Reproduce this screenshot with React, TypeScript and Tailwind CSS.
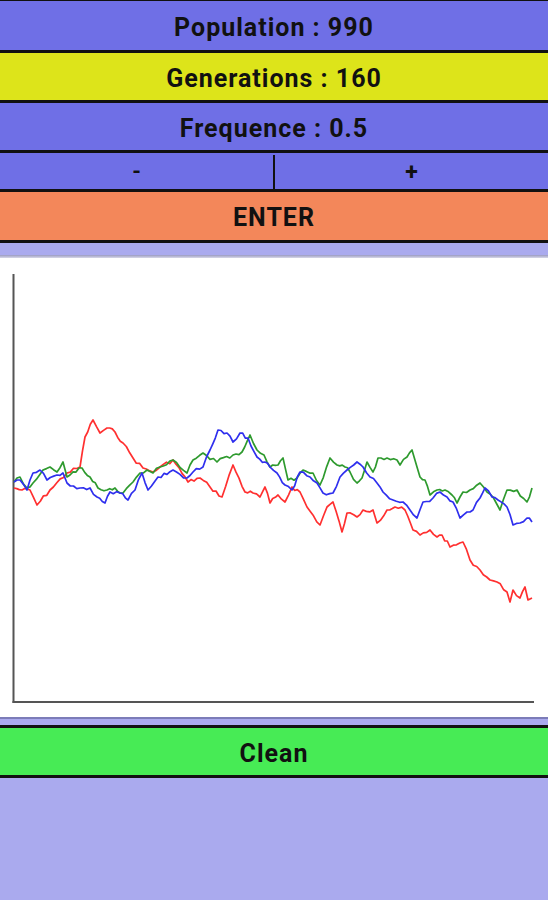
import React from "react";

type Pt = [number, number];

const red: Pt[] = [
  [14, 488], [22, 490], [30, 490], [37, 505], [50, 490], [67, 473], [80, 467], [85, 437], [93, 420],
  [100, 433], [107, 428], [115, 432], [123, 443], [133, 458], [143, 468], [153, 472], [160, 467],
  [173, 460], [188, 482], [200, 478], [210, 487], [222, 497], [233, 465], [245, 492], [253, 493],
  [260, 497], [265, 487], [270, 503], [278, 495], [285, 502], [292, 487], [300, 492], [307, 507],
  [320, 525], [327, 507], [333, 502], [342, 532], [347, 513], [357, 517], [363, 510], [373, 510],
  [377, 523], [387, 510], [395, 507], [405, 510], [413, 530], [420, 535], [430, 530], [437, 537],
  [442, 535], [450, 547], [463, 542], [470, 560], [480, 570], [490, 580], [497, 582], [507, 592],
  [510, 602], [513, 590], [520, 598], [525, 587], [528, 600], [532, 598],
];

const blue: Pt[] = [
  [14, 482], [20, 480], [27, 490], [33, 473], [40, 470], [47, 480], [57, 475], [63, 473], [67, 483],
  [80, 488], [90, 488], [97, 497], [105, 503], [110, 492], [120, 493], [128, 500], [135, 490],
  [142, 473], [148, 490], [158, 477], [173, 470], [187, 478], [193, 472], [203, 467], [210, 450],
  [218, 430], [227, 433], [233, 442], [240, 433], [248, 438], [257, 457], [265, 462], [270, 467],
  [277, 473], [285, 485], [292, 490], [300, 472], [310, 477], [317, 483], [323, 493], [333, 493],
  [340, 477], [347, 470], [357, 462], [363, 467], [370, 477], [377, 483], [383, 492], [393, 500],
  [403, 502], [410, 510], [417, 518], [423, 502], [433, 498], [440, 492], [447, 497], [453, 502],
  [460, 518], [467, 512], [473, 510], [480, 498], [485, 488], [492, 497], [498, 500], [507, 507],
  [513, 525], [520, 523], [527, 518], [532, 522],
];

const green: Pt[] = [
  [14, 482], [20, 477], [27, 488], [33, 483], [43, 470], [50, 467], [57, 472], [63, 462], [67, 477],
  [82, 468], [90, 477], [98, 488], [107, 490], [115, 488], [123, 493], [133, 482], [140, 473],
  [147, 470], [153, 473], [160, 467], [173, 460], [187, 473], [193, 460], [203, 453], [217, 462],
  [233, 455], [242, 452], [250, 435], [257, 450], [264, 455], [270, 467], [278, 465], [283, 458],
  [288, 480], [297, 478], [303, 470], [313, 473], [320, 485], [330, 458], [337, 465], [345, 467],
  [350, 472], [357, 483], [362, 478], [367, 462], [373, 472], [378, 458], [387, 458], [397, 460],
  [400, 465], [407, 457], [412, 450], [417, 467], [420, 477], [425, 480], [430, 495], [437, 490],
  [445, 490], [452, 495], [457, 503], [463, 492], [470, 490], [480, 483], [487, 492], [493, 497],
  [500, 510], [507, 490], [517, 490], [527, 502], [532, 488],
];

// add small jitter between anchors so the walk looks rough
function jagged(pts: Pt[], seed: number): string {
  let s = seed;
  const rnd = () => {
    s = (s * 9301 + 49297) % 233280;
    return s / 233280;
  };
  const out: Pt[] = [];
  for (let i = 0; i < pts.length - 1; i++) {
    const [x0, y0] = pts[i];
    const [x1, y1] = pts[i + 1];
    const steps = Math.max(1, Math.round((x1 - x0) / 3.2));
    for (let k = 0; k < steps; k++) {
      const t = k / steps;
      const j = k === 0 ? 0 : (rnd() - 0.5) * 4;
      out.push([x0 + (x1 - x0) * t, y0 + (y1 - y0) * t + j]);
    }
  }
  out.push(pts[pts.length - 1]);
  return out.map(([x, y]) => `${x.toFixed(1)},${y.toFixed(1)}`).join(" ");
}

const Row = ({ label, bg, h }: { label: string; bg: string; h: string }) => (
  <div className={`flex items-center justify-center border-b-[3px] border-[#111] pt-[3px] ${bg} ${h}`}>
    <span className="text-[25px] font-bold leading-none tracking-[1px] text-[#111]">{label}</span>
  </div>
);

export default function App() {
  return (
    <div
      className="h-[900px] w-[548px] overflow-hidden bg-[#aaaaee] flex flex-col"
      style={{ fontFamily: "Roboto, 'Noto Sans', sans-serif" }}
    >
      <div className="h-[1px] bg-[#111]" />
      <Row label="Population : 990" bg="bg-[#6f6fe6]" h="h-[52px]" />
      <Row label="Generations : 160" bg="bg-[#dde41a]" h="h-[50px]" />
      <Row label="Frequence : 0.5" bg="bg-[#6f6fe6]" h="h-[50px]" />
      <div className="flex h-[39px] border-b-[3px] border-[#111] bg-[#6f6fe6] pt-[2px]">
        <div className="flex flex-1 items-center justify-center border-r-[2px] border-[#111] text-[22px] font-bold leading-none text-[#111]">
          -
        </div>
        <div className="flex flex-1 items-center justify-center text-[23px] font-bold leading-none text-[#111]">
          +
        </div>
      </div>
      <Row label="ENTER" bg="bg-[#f3875a]" h="h-[51px]" />
      <div className="h-[12px] bg-[#aaaaee]" />
      <div className="h-[3px] bg-gradient-to-b from-[#9a9ac0] to-[#d8d8e8]" />
      <div className="h-[459px] bg-white">
        <svg width="548" height="459" viewBox="0 258 548 459">
          <line x1="13.5" y1="274" x2="13.5" y2="703" stroke="#555" strokeWidth="2" />
          <line x1="12.5" y1="702" x2="534" y2="702" stroke="#555" strokeWidth="2" />
          <polyline points={jagged(red, 7)} fill="none" stroke="#ff3030" strokeWidth="1.7" strokeLinejoin="round" />
          <polyline points={jagged(green, 23)} fill="none" stroke="#2e9a2e" strokeWidth="1.7" strokeLinejoin="round" />
          <polyline points={jagged(blue, 51)} fill="none" stroke="#2f2fee" strokeWidth="1.7" strokeLinejoin="round" />
        </svg>
      </div>
      <div className="h-[2px] bg-[#7c7cb8]" />
      <div className="h-[6px] bg-[#aaaaee]" />
      <div className="flex h-[53px] items-center justify-center border-y-[3px] border-[#111] bg-[#47eb55] pt-[3px]">
        <span className="text-[25px] font-bold leading-none tracking-[1px] text-[#111]">Clean</span>
      </div>
      <div className="flex-1 bg-[#aaaaee]" />
    </div>
  );
}
